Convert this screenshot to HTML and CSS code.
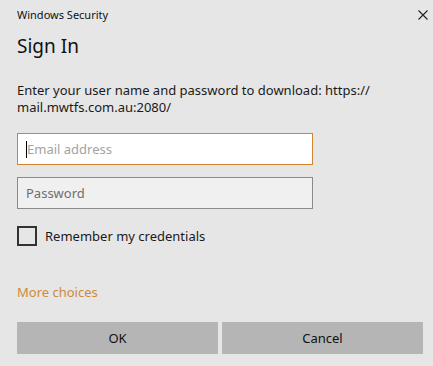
FILE: index.html
```html
<!DOCTYPE html>
<html lang="en">
<head>
  <meta charset="UTF-8">
  <title>Windows Security</title>
  <link rel="stylesheet" href="styles.css">
</head>
<body>

<div class="dialog">
  <div class="titlebar">
    <span class="app-name">Windows Security</span>
    <svg class="close" width="10" height="10" viewBox="0 0 10 10">
      <path d="M0.5 0.5 L9.5 9.5 M9.5 0.5 L0.5 9.5" stroke="#222" stroke-width="1.1" fill="none"/>
    </svg>
  </div>

  <h1>Sign In</h1>

  <p class="message">Enter your user name and password to download: https://<br>mail.mwtfs.com.au:2080/</p>

  <!-- credential fields -->
  <div class="field focused">
    <span class="caret"></span>
    <span class="placeholder">Email address</span>
  </div>
  <div class="field">
    <span class="placeholder dark">Password</span>
  </div>

  <label class="remember">
    <span class="checkbox"></span>
    Remember my credentials
  </label>

  <a class="more" href="#">More choices</a>

  <div class="buttons">
    <button>OK</button>
    <button>Cancel</button>
  </div>
</div>

</body>
</html>
```

FILE: styles.css
```css
body {
  margin: 0;
  background: #e6e6e6;
  font-family: "Noto Sans", "Open Sans", Arial, sans-serif;
  color: #1a1a1a;
}

.dialog {
  width: 433px;
  height: 366px;
  padding: 0 10px 0 17px;
  box-sizing: border-box;
}

.titlebar {
  display: flex;
  justify-content: space-between;
  align-items: center;
  height: 29px;
  margin-right: -5px;
  font-size: 11px;
  color: #111;
}

h1 {
  margin: 3px 0 0;
  font-size: 19px;
  font-weight: normal;
  line-height: 28px;
  color: #111;
}

.message {
  margin: 22px 0 0;
  font-size: 13px;
  line-height: 17px;
  color: #1a1a1a;
}

.field {
  width: 296px;
  height: 32px;
  box-sizing: border-box;
  border: 1px solid #8a8a8a;
  background: #f0f0f0;
  display: flex;
  align-items: center;
  padding-left: 8px;
  margin-top: 12px;
  font-size: 13px;
}

.field.focused {
  margin-top: 17px;
  border-color: #d4842b;
  background: #fff;
}

.caret {
  width: 1px;
  height: 17px;
  background: #000;
}

.placeholder {
  color: #a3a3a3;
}

.placeholder.dark {
  color: #6e6e6e;
}

.remember {
  display: flex;
  align-items: center;
  gap: 8px;
  margin-top: 17px;
  font-size: 13px;
  line-height: 19px;
  color: #1a1a1a;
}

.checkbox {
  width: 20px;
  height: 20px;
  box-sizing: border-box;
  border: 2px solid #333;
}

.more {
  display: block;
  margin-top: 37px;
  font-size: 13px;
  line-height: 19px;
  color: #cd8a3d;
  text-decoration: none;
}

.buttons {
  display: flex;
  gap: 4px;
  margin-top: 20px;
  width: 406px;
}

.buttons button {
  flex: 1;
  height: 32px;
  border: none;
  background: #b5b5b5;
  font-family: inherit;
  font-size: 13px;
  color: #111;
}
```
